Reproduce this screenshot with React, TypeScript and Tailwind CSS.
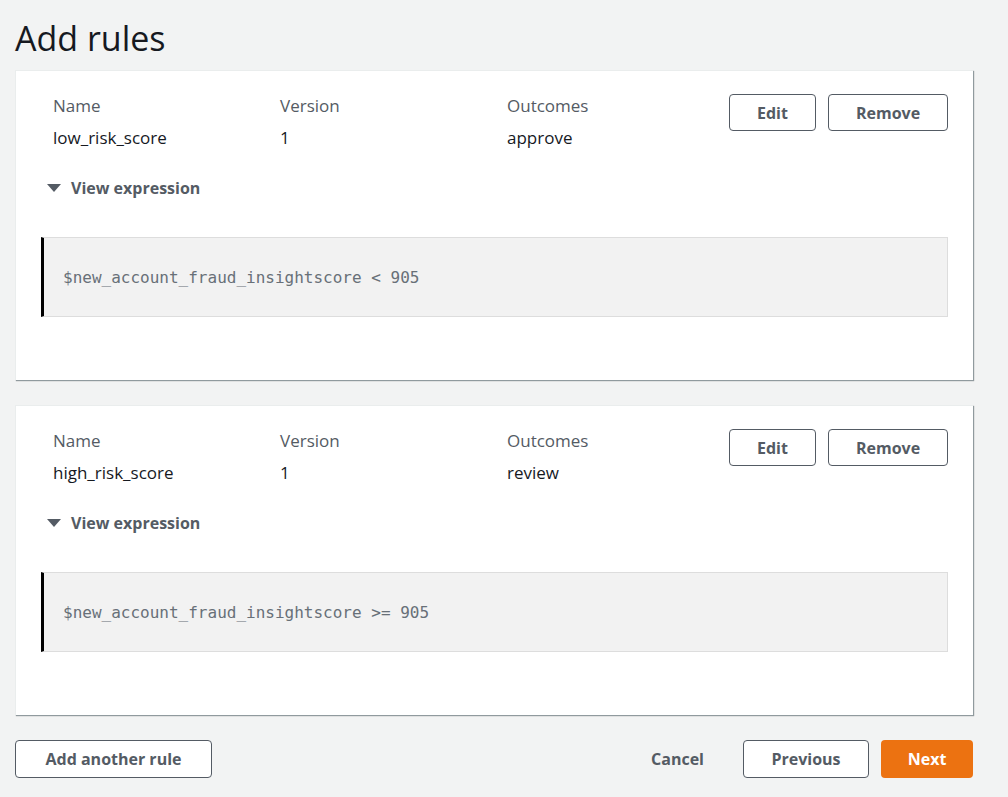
import React from "react"

const rules = [
  { name: "low_risk_score", version: "1", outcome: "approve", expr: "$new_account_fraud_insightscore < 905" },
  { name: "high_risk_score", version: "1", outcome: "review", expr: "$new_account_fraud_insightscore >= 905" },
]

function RuleCard({ rule }: { rule: (typeof rules)[number] }) {
  return (
    <div className="bg-white shadow-[1px_1px_1px_0_rgba(0,28,36,0.3),1px_1px_1px_0_rgba(0,28,36,0.15)] border-t border-l border-[#eaeded] pt-6 pb-[63px] pl-[25px] pr-[25px]">
      <div className="flex items-start">
        <div className="flex flex-1 pl-[12px] text-[17px]">
          <div className="w-[227px]">
            <div className="text-[#545b64] leading-[22px]">Name</div>
            <div className="text-[#16191f] leading-[22px] mt-[10px]">{rule.name}</div>
          </div>
          <div className="w-[227px]">
            <div className="text-[#545b64] leading-[22px]">Version</div>
            <div className="text-[#16191f] leading-[22px] mt-[10px]">{rule.version}</div>
          </div>
          <div className="w-[200px]">
            <div className="text-[#545b64] leading-[22px]">Outcomes</div>
            <div className="text-[#16191f] leading-[22px] mt-[10px]">{rule.outcome}</div>
          </div>
        </div>
        <div className="flex gap-3 -mt-px">
          <button className="h-[37px] w-[87px] border border-[#545b64] rounded-sm bg-white text-[#545b64] font-bold">Edit</button>
          <button className="h-[37px] w-[120px] border border-[#545b64] rounded-sm bg-white text-[#545b64] font-bold">Remove</button>
        </div>
      </div>
      <div className="flex items-center mt-[27px] pl-[6px] text-[#545b64] font-bold">
        <svg width="14" height="10" viewBox="0 0 14 10" className="mr-[10px]">
          <polygon points="0,1 14,1 7,9" fill="#545b64" />
        </svg>
        View expression
      </div>
      <div className="mt-[37px] h-[80px] bg-[#f2f2f2] border border-[#dddddd] border-l-[3px] border-l-black flex items-center pl-[19px] pt-[2px] text-[#687078] text-[16px] font-['DejaVu_Sans_Mono',monospace]">
        {rule.expr}
      </div>
    </div>
  )
}

export default function App() {
  return (
    <div className="min-h-screen bg-[#f2f3f3] font-['Open_Sans',sans-serif] text-[16px] pl-[15px] pr-[35px]">
      <h1 className="text-[34px] leading-[40px] text-[#16191f] pt-[18px] pb-[12px]">Add rules</h1>
      <div className="flex flex-col gap-[25px]">
        {rules.map((r) => (
          <RuleCard key={r.name} rule={r} />
        ))}
      </div>
      <div className="flex items-center mt-[25px]">
        <button className="h-[38px] w-[197px] border border-[#545b64] rounded-sm bg-white text-[#545b64] font-bold">Add another rule</button>
        <div className="flex-1" />
        <button className="text-[#545b64] font-bold mr-[39px]">Cancel</button>
        <button className="h-[38px] w-[126px] border border-[#545b64] rounded-sm bg-white text-[#545b64] font-bold mr-3">Previous</button>
        <button className="h-[38px] w-[92px] rounded-sm bg-[#ec7211] text-white font-bold">Next</button>
      </div>
    </div>
  )
}
